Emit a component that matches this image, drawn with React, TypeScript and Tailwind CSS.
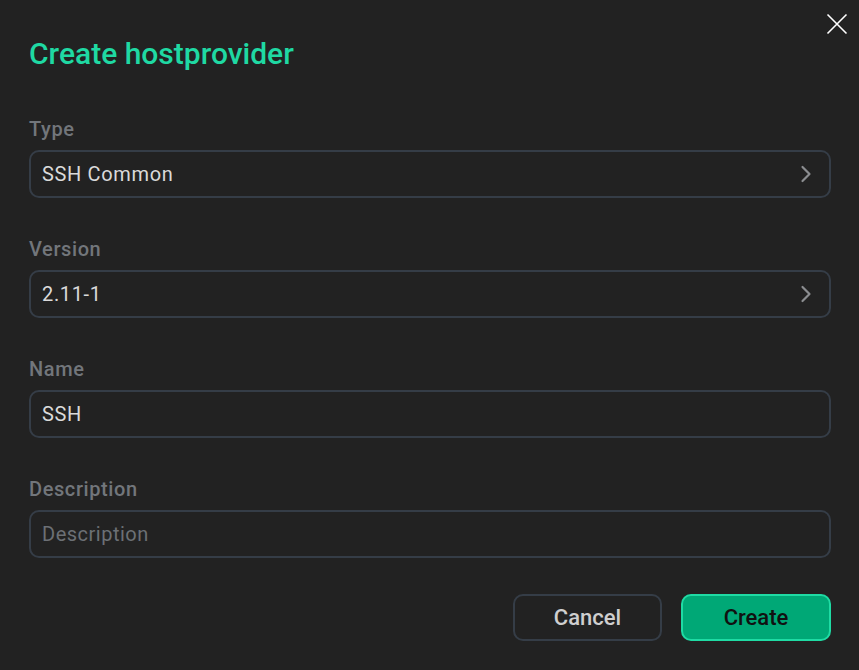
import React from "react";

function Chevron() {
  return (
    <svg width="12" height="18" viewBox="0 0 12 18" fill="none" className="shrink-0">
      <path d="M2.5 2 L9.5 9 L2.5 16" stroke="#8b8d90" strokeWidth="2.2" strokeLinecap="round" strokeLinejoin="round" />
    </svg>
  );
}

function Field({ label, value, placeholder, select }: { label: string; value?: string; placeholder?: string; select?: boolean }) {
  return (
    <div className="flex flex-col">
      <div className="text-[20px] leading-[22px] font-medium tracking-[0.6px] text-[#72767b]">{label}</div>
      <div className="mt-[10px] h-[48px] rounded-[10px] border-2 border-[#353d47] flex items-center pl-[11px] pr-[17px] justify-between">
        {value ? (
          <span className="text-[20px] tracking-[0.65px] text-[#dadada]">{value}</span>
        ) : (
          <span className="text-[20px] tracking-[0.5px] text-[#6c7075]">{placeholder}</span>
        )}
        {select && <Chevron />}
      </div>
    </div>
  );
}

export default function App() {
  return (
    <div
      className="w-[859px] h-[670px] bg-[#222222] relative pl-[29px] pr-[28px] pt-[36px]"
      style={{ fontFamily: "Roboto, 'Liberation Sans', sans-serif" }}
    >
      <button className="absolute right-[10px] top-[12px] w-[24px] h-[24px] flex items-center justify-center">
        <svg width="22" height="22" viewBox="0 0 22 22" fill="none">
          <path d="M1.5 1.5 L20.5 20.5 M20.5 1.5 L1.5 20.5" stroke="#ffffff" strokeWidth="1.6" />
        </svg>
      </button>
      <h1 className="text-[30px] leading-[36px] font-medium text-[#1fd9a3]">Create hostprovider</h1>
      <div className="mt-[46px] flex flex-col gap-[40px]">
        <Field label="Type" value="SSH Common" select />
        <Field label="Version" value="2.11-1" select />
        <Field label="Name" value="SSH" />
        <Field label="Description" placeholder="Description" />
      </div>
      <div className="mt-[36px] flex justify-end gap-[19px]">
        <button className="w-[149px] h-[47px] rounded-[10px] border-2 border-[#353d47] text-[22px] font-medium text-[#cfcfcf]">
          Cancel
        </button>
        <button className="w-[150px] h-[47px] rounded-[10px] border-2 border-[#1fdba4] bg-[#00a876] text-[22px] font-medium text-[#111111]">
          Create
        </button>
      </div>
    </div>
  );
}
